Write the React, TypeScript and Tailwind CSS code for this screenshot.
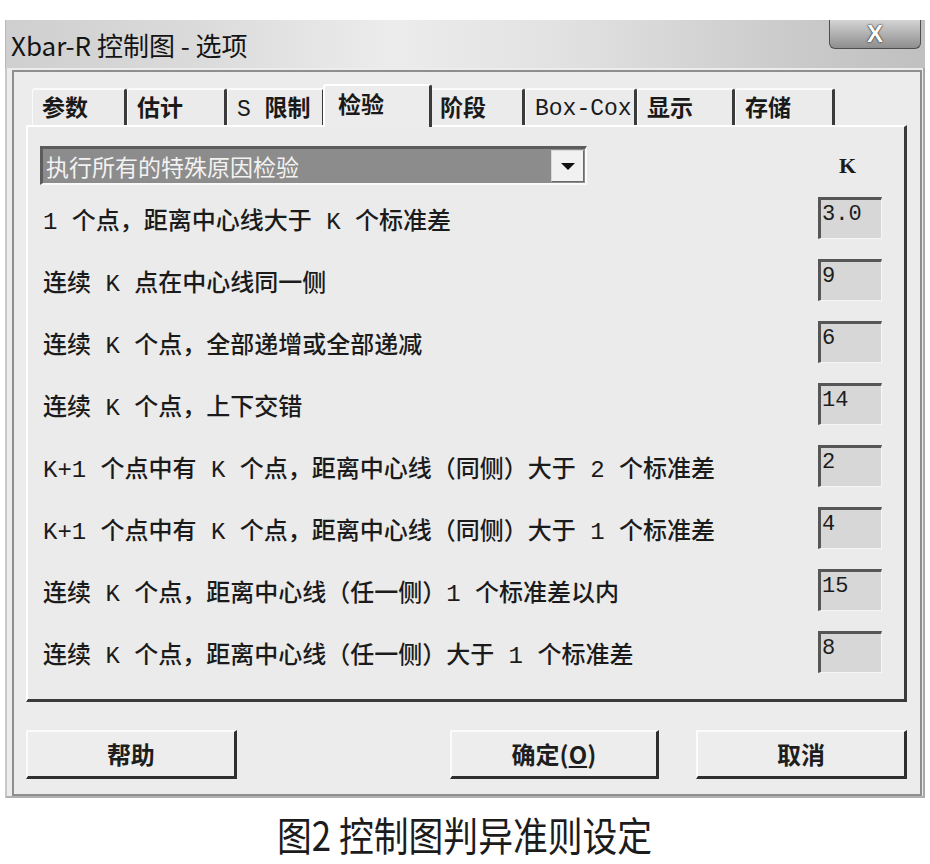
import React from 'react';

const MONO = '"Liberation Mono", monospace';
const SANS_CJK = '"Noto Sans CJK SC", "Liberation Sans", sans-serif';

const TAB_LIST: { label: string; w: number; active?: boolean }[] = [
  { label: '参数', w: 95 },
  { label: '估计', w: 100 },
  { label: 'S 限制', w: 98 },
  { label: '检验', w: 105, active: true },
  { label: '阶段', w: 95 },
  { label: 'Box-Cox', w: 112 },
  { label: '显示', w: 98 },
  { label: '存储', w: 100 },
];

const RULES: { text: string; k: string }[] = [
  { text: '1 个点，距离中心线大于 K 个标准差', k: '3.0' },
  { text: '连续 K 点在中心线同一侧', k: '9' },
  { text: '连续 K 个点，全部递增或全部递减', k: '6' },
  { text: '连续 K 个点，上下交错', k: '14' },
  { text: 'K+1 个点中有 K 个点，距离中心线（同侧）大于 2 个标准差', k: '2' },
  { text: 'K+1 个点中有 K 个点，距离中心线（同侧）大于 1 个标准差', k: '4' },
  { text: '连续 K 个点，距离中心线（任一侧）1 个标准差以内', k: '15' },
  { text: '连续 K 个点，距离中心线（任一侧）大于 1 个标准差', k: '8' },
];

// Latin runs in a monospace half-width face, CJK runs in Noto with weight
function Mixed({ text, cjk }: { text: string; cjk: string }) {
  const parts = text.split(/([\x20-\x7E]+)/).filter(Boolean);
  return (
    <>
      {parts.map((p, i) =>
        /^[\x20-\x7E]+$/.test(p) ? (
          <span key={i} className="font-normal whitespace-pre" style={{ fontFamily: MONO }}>
            {p}
          </span>
        ) : (
          <span key={i} className={cjk} style={{ fontFamily: SANS_CJK }}>
            {p}
          </span>
        )
      )}
    </>
  );
}

function Tab({ label, w, active }: { label: string; w: number; active?: boolean }) {
  if (active) {
    return (
      <div
        className="relative z-10 -mb-[2px] h-[43px] -mx-[2px] bg-[#ececec] border-t-2 border-l-2 border-white border-r-[3px] border-r-[#3a3a3a] rounded-t-[3px] pl-[13px] text-[23px] leading-[34px] text-[#1a1a1a]"
        style={{ width: w + 4 }}
      >
        <Mixed text={label} cjk="font-semibold" />
      </div>
    );
  }
  return (
    <div
      className="h-[37px] bg-[#ebebeb] border-t-2 border-l border-[#fafafa] border-r-[3px] border-r-[#3a3a3a] rounded-t-[3px] pl-[9px] text-[23px] text-[#1a1a1a] leading-[32px]"
      style={{ width: w }}
    >
      <Mixed text={label} cjk="font-semibold" />
    </div>
  );
}

function Button({ children, w }: { children: React.ReactNode; w: number }) {
  return (
    <div
      className="h-[49px] bg-[#ededed] border-t-2 border-l-2 border-[#fbfbfb] border-r-[3px] border-b-[3px] border-r-[#2f2f2f] border-b-[#2f2f2f] flex items-center justify-center text-[24px] font-semibold text-[#1e1e1e]"
      style={{ width: w, fontFamily: SANS_CJK }}
    >
      {children}
    </div>
  );
}

export default function App() {
  return (
    <div className="w-[930px] h-[864px] bg-white flex flex-col overflow-hidden">
      <div className="h-[20px]" />

      {/* dialog window */}
      <div className="ml-[5px] w-[920px] flex flex-col">
        {/* title bar */}
        <div className="h-[48px] flex justify-between bg-[linear-gradient(90deg,#cfcfcf_0%,#dadada_20%,#ececec_42%,#e2e2e2_60%,#cbcbcb_85%,#c0c0c0_100%)] border-l border-[#b8b8b8]">
          <div
            className="pl-[5px] pt-[5px] text-[26px] text-[#141414]"
            style={{ fontFamily: SANS_CJK }}
          >
            Xbar-R 控制图 - 选项
          </div>
          <div className="mr-[4px] w-[92px] h-[29px] rounded-b-[6px] border border-t-0 border-[#4e4e4e] bg-[linear-gradient(180deg,#d4d4d4_0%,#b4b4b4_45%,#8e8e8e_100%)] flex items-center justify-center">
            <span
              className="text-[24px] font-bold text-white leading-none [text-shadow:0_0_2px_#222,0_0_1px_#111]"
              style={{ fontFamily: '"Liberation Sans", sans-serif' }}
            >
              X
            </span>
          </div>
        </div>

        {/* body */}
        <div className="h-[730px] bg-[#ececec] border-l-2 border-r-2 border-b-2 border-l-[#c8c8c8] border-r-[#a8a8a8] border-b-[#b0b0b0] pl-[5px] pr-[1px] pt-[2px]">
          <div className="h-[726px] border-2 border-[#8e8e8e] pl-[12px] pr-[13px] pt-[12px]">
            {/* tabs */}
            <div className="h-[41px] flex items-end pl-[6px]">
              {TAB_LIST.map((t) => (
                <Tab key={t.label} label={t.label} w={t.w} active={t.active} />
              ))}
            </div>

            {/* tab panel */}
            <div className="w-[881px] h-[577px] bg-[#ebebeb] border-t-2 border-l-2 border-white border-r-[3px] border-b-[3px] border-r-[#3a3a3a] border-b-[#3a3a3a] pl-[12px] pr-[22px] pt-[19px]">
              {/* dropdown row */}
              <div className="h-[39px] flex items-center justify-between">
                <div className="w-[547px] h-[39px] border-t-[3px] border-l-[3px] border-[#5c5c5c] border-b-2 border-r-2 border-b-[#fafafa] border-r-[#fafafa] bg-[#8c8c8c] flex items-center justify-between">
                  <span
                    className="pl-[3px] text-[23px] text-[#f2f2f2] leading-none"
                    style={{ fontFamily: SANS_CJK }}
                  >
                    执行所有的特殊原因检验
                  </span>
                  <div className="mr-[1px] w-[33px] h-[32px] bg-[#f1f1f1] border border-[#d8d8d8] border-r-[#6a6a6a] border-b-[#6a6a6a] flex items-center justify-center">
                    <svg width="16" height="9" viewBox="0 0 16 9">
                      <path d="M1 1 L15 1 L8 8 Z" fill="#111" />
                    </svg>
                  </div>
                </div>
                <span
                  className="mr-[26px] text-[22px] font-bold text-[#1a1a1a]"
                  style={{ fontFamily: '"Liberation Serif", serif' }}
                >
                  K
                </span>
              </div>

              {/* rules */}
              <div className="mt-[2px] flex flex-col">
                {RULES.map((r) => (
                  <div key={r.text} className="h-[62px] flex items-center justify-between">
                    <span className="pl-[3px] pt-[6px] text-[24px] text-[#1b1b1b] whitespace-nowrap">
                      <Mixed text={r.text} cjk="font-medium" />
                    </span>
                    <div
                      className="w-[64px] h-[42px] bg-[#d7d7d7] border-t-[3px] border-l-[3px] border-[#565656] border-b border-r border-b-[#f6f6f6] border-r-[#f6f6f6] pl-[1px] pt-[3px] text-[22px] text-[#1c1c1c] leading-[24px]"
                      style={{ fontFamily: MONO }}
                    >
                      {r.k}
                    </div>
                  </div>
                ))}
              </div>
            </div>

            {/* buttons */}
            <div className="mt-[28px] flex">
              <Button w={211}>帮助</Button>
              <div className="w-[213px]" />
              <Button w={210}>
                确定(<span className="underline">O</span>)
              </Button>
              <div className="w-[37px]" />
              <Button w={211}>取消</Button>
            </div>
          </div>
        </div>
      </div>

      {/* caption */}
      <div className="flex justify-center pt-[6px]">
        <span
          className="inline-block text-[40px] text-[#1c1c1c] scale-x-[0.87]"
          style={{ fontFamily: SANS_CJK }}
        >
          图2 控制图判异准则设定
        </span>
      </div>
    </div>
  );
}
